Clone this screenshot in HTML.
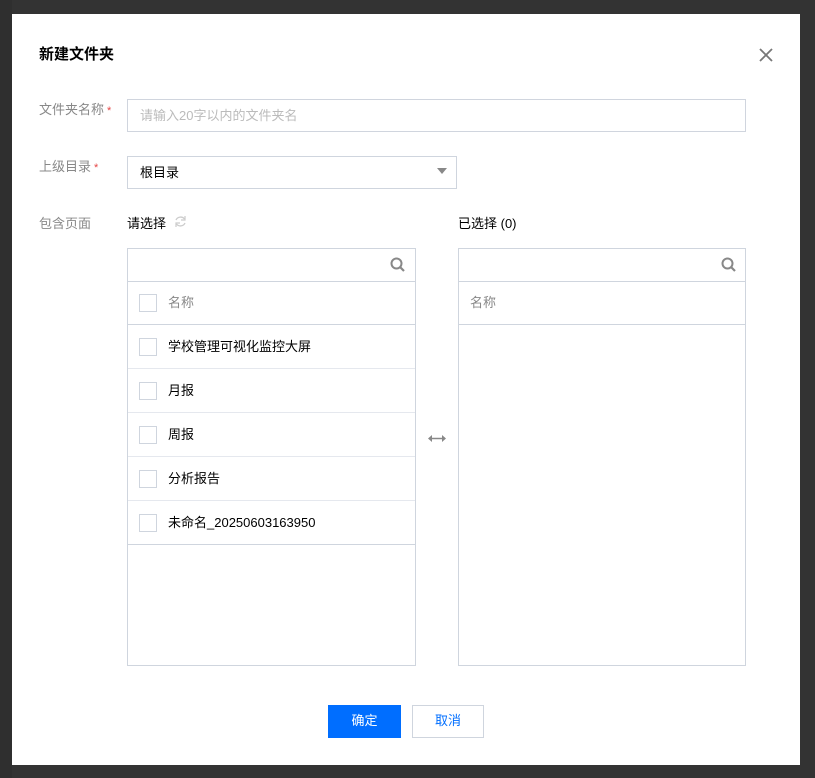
<!DOCTYPE html>
<html><head><meta charset="utf-8"><style>
*{box-sizing:border-box;margin:0;padding:0}
body{width:815px;height:778px;background:#333;position:relative;overflow:hidden;font-family:"Liberation Sans","Noto Sans CJK SC",sans-serif;font-size:13px;color:#000}
.a{position:absolute}
.dlg{left:12px;top:14px;width:788px;height:751px;background:#fff}
.lbl{color:#888;font-size:13px}
.star{color:#e54545;font-size:11px;margin-left:3px}
.box{border:1px solid #dcdfe6}
.panel{border:1px solid #cfd5de;background:#fff}
.cb{position:absolute;left:11px;width:18px;height:18px;border:1px solid #cfd5de;background:#fff}
.row{position:absolute;left:0;right:0;height:44px;border-bottom:1px solid #e5e8ee}
.row span{position:absolute;left:40px;top:11px;color:#000}
</style></head><body>
<div class="a" style="left:0;top:0;width:12px;height:778px;background:#2f2f2f"></div>
<div class="a dlg"></div>
<div class="a" style="left:39px;top:43px;font-weight:bold;font-size:15px">新建文件夹</div>
<svg class="a" style="left:758px;top:47px" width="16" height="16"><path d="M2 2L14 14M14 2L2 14" stroke="#777" stroke-width="1.8"/></svg>

<div class="a lbl" style="left:39px;top:99px">文件夹名称<span class="star">*</span></div>
<div class="a box" style="left:127px;top:99px;width:619px;height:33px;border-color:#d0d5de"></div>
<div class="a" style="left:140px;top:105px;color:#bbb">请输入20字以内的文件夹名</div>

<div class="a lbl" style="left:39px;top:156px">上级目录<span class="star">*</span></div>
<div class="a box" style="left:127px;top:156px;width:330px;height:33px;border-color:#cfd5de"></div>
<div class="a" style="left:140px;top:162px">根目录</div>
<svg class="a" style="left:437px;top:168px" width="10" height="7"><path d="M0 0H10L5 6Z" fill="#888"/></svg>

<div class="a lbl" style="left:39px;top:213px">包含页面</div>
<div class="a" style="left:127px;top:213px">请选择</div>
<svg class="a" style="left:174px;top:215px" width="13" height="13"><path d="M10.5 4A5 5 0 0 0 2 5M2.5 9A5 5 0 0 0 11 8" stroke="#ccc" stroke-width="1.3" fill="none"/><path d="M11 1V5H7" stroke="#ccc" stroke-width="1.2" fill="none"/><path d="M2 12V8H6" stroke="#ccc" stroke-width="1.2" fill="none"/></svg>
<div class="a" style="left:458px;top:213px">已选择 (0)</div>

<div class="a panel" style="left:127px;top:248px;width:289px;height:418px">
 <div class="row" style="top:0;height:33px;border-color:#cfd5de"></div>
 <svg class="a" style="left:262px;top:8px" width="16" height="16"><circle cx="6.5" cy="6.5" r="5" stroke="#888" stroke-width="2" fill="none"/><path d="M10 10L14 14" stroke="#888" stroke-width="2.2"/></svg>
 <div class="row" style="top:32px;border-color:#cfd5de"><div class="cb" style="top:13px"></div><span style="color:#888">名称</span></div>
 <div class="row" style="top:76px"><div class="cb" style="top:13px"></div><span>学校管理可视化监控大屏</span></div>
 <div class="row" style="top:120px"><div class="cb" style="top:13px"></div><span>月报</span></div>
 <div class="row" style="top:164px"><div class="cb" style="top:13px"></div><span>周报</span></div>
 <div class="row" style="top:208px"><div class="cb" style="top:13px"></div><span>分析报告</span></div>
 <div class="row" style="top:252px;border-color:#cfd5de"><div class="cb" style="top:13px"></div><span>未命名_20250603163950</span></div>
</div>
<svg class="a" style="left:428px;top:434px" width="18" height="9"><path d="M3 4.5H15" stroke="#888" stroke-width="1.5"/><path d="M0 4.5L4 1V8Z M18 4.5L14 1V8Z" fill="#888"/></svg>
<div class="a panel" style="left:458px;top:248px;width:288px;height:418px">
 <div class="row" style="top:0;height:33px;border-color:#cfd5de"></div>
 <svg class="a" style="left:262px;top:8px" width="16" height="16"><circle cx="6.5" cy="6.5" r="5" stroke="#888" stroke-width="2" fill="none"/><path d="M10 10L14 14" stroke="#888" stroke-width="2.2"/></svg>
 <div class="row" style="top:32px;border-color:#cfd5de"><span style="left:11px;color:#888">名称</span></div>
</div>

<div class="a" style="left:328px;top:705px;width:73px;height:33px;background:#006eff;color:#fff;text-align:center;line-height:31px">确定</div>
<div class="a" style="left:412px;top:705px;width:72px;height:33px;border:1px solid #cfd5de;color:#006eff;text-align:center;line-height:29px">取消</div>
</body></html>
